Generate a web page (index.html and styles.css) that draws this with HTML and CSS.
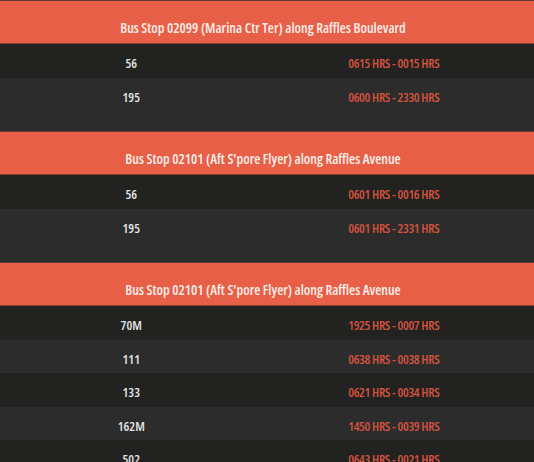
FILE: index.html
```html
<!DOCTYPE html>
<html>
<head>
<meta charset="utf-8">
<link rel="stylesheet" href="styles.css">
</head>
<body>
<div class="page">
  <section class="stop">
    <h2 class="stop-title">Bus Stop 02099 (Marina Ctr Ter) along Raffles Boulevard</h2>
    <div class="row"><span class="svc">56</span><span class="hrs">0615 HRS - 0015 HRS</span></div>
    <div class="row"><span class="svc">195</span><span class="hrs">0600 HRS - 2330 HRS</span></div>
  </section>
  <section class="stop">
    <h2 class="stop-title">Bus Stop 02101 (Aft S'pore Flyer) along Raffles Avenue</h2>
    <div class="row"><span class="svc">56</span><span class="hrs">0601 HRS - 0016 HRS</span></div>
    <div class="row"><span class="svc">195</span><span class="hrs">0601 HRS - 2331 HRS</span></div>
  </section>
  <section class="stop">
    <h2 class="stop-title">Bus Stop 02101 (Aft S'pore Flyer) along Raffles Avenue</h2>
    <div class="row"><span class="svc">70M</span><span class="hrs">1925 HRS - 0007 HRS</span></div>
    <div class="row"><span class="svc">111</span><span class="hrs">0638 HRS - 0038 HRS</span></div>
    <div class="row"><span class="svc">133</span><span class="hrs">0621 HRS - 0034 HRS</span></div>
    <div class="row"><span class="svc">162M</span><span class="hrs">1450 HRS - 0039 HRS</span></div>
    <div class="row"><span class="svc">502</span><span class="hrs">0643 HRS - 0021 HRS</span></div>
  </section>
</div>
</body>
</html>
```

FILE: styles.css
```css
html, body {
  margin: 0;
  padding: 0;
  background: #2c2c2c;
}
body {
  font-family: "Open Sans", "DejaVu Sans", sans-serif;
  font-stretch: condensed;
  font-weight: 600;
  width: 534px;
  height: 462px;
  overflow: hidden;
}
.page {
  display: flex;
  flex-direction: column;
}
.stop {
  padding-bottom: 20px;
}
.stop-title {
  margin: 0;
  box-sizing: border-box;
  height: 44px;
  padding-top: 10px;
  line-height: 33px;
  background: #e85f48;
  border-top: 1px solid #5c3d36;
  border-bottom: 1px solid #8e3d2e;
  color: #fbefe8;
  font-size: 14px;
  font-weight: 600;
  text-align: center;
  padding-right: 8px;
  white-space: nowrap;
}
.row {
  display: grid;
  grid-template-columns: 1fr 1fr;
  box-sizing: border-box;
  height: 33.5px;
  padding-top: 5px;
  padding-right: 9px;
  line-height: 28.5px;
  font-size: 13px;
}
.row:nth-of-type(odd) {
  background: #222221;
}
.row:nth-of-type(even) {
  background: #2c2c2c;
}
.svc {
  text-align: center;
  color: #e4e4e4;
}
.hrs {
  text-align: center;
  color: #d4533f;
  letter-spacing: -0.35px;
}
```
